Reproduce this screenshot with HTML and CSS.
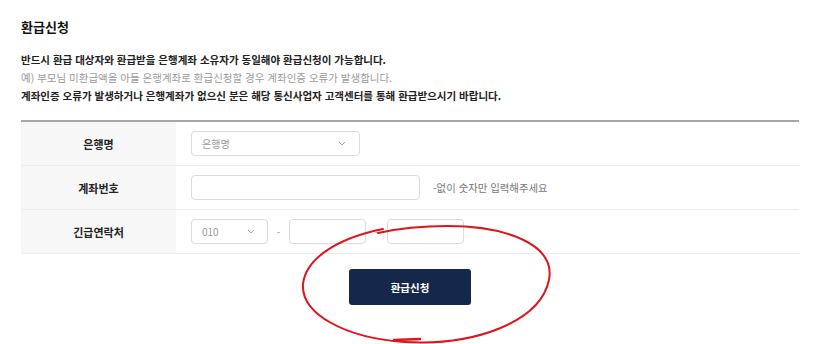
FILE: index.html
```html
<!DOCTYPE html>
<html lang="ko">
<head>
    <meta charset="UTF-8">
    <meta name="viewport" content="width=device-width, initial-scale=1.0">
    <title>환급신청</title>
    <link rel="stylesheet" href="styles.css">
</head>
<body>
    <div class="page">
        <h2 class="title">환급신청</h2>
        <div class="notice">
            <p class="strong">반드시 환급 대상자와 환급받을 은행계좌 소유자가 동일해야 환급신청이 가능합니다.</p>
            <p class="muted">예) 부모님 미환급액을 아들 은행계좌로 환급신청할 경우 계좌인증 오류가 발생합니다.</p>
            <p class="strong">계좌인증 오류가 발생하거나 은행계좌가 없으신 분은 해당 통신사업자 고객센터를 통해 환급받으시기 바랍니다.</p>
        </div>

        <div class="form-table">
            <div class="row">
                <div class="label">은행명</div>
                <div class="field">
                    <div class="select bank">
                        <span>은행명</span>
                        <svg width="8" height="5" viewBox="0 0 8 5"><path d="M1 1l3 3 3-3" fill="none" stroke="#aaa" stroke-width="1"/></svg>
                    </div>
                </div>
            </div>
            <div class="row">
                <div class="label">계좌번호</div>
                <div class="field">
                    <div class="input account"></div>
                    <span class="help">-없이 숫자만 입력해주세요</span>
                </div>
            </div>
            <div class="row">
                <div class="label">긴급연락처</div>
                <div class="field">
                    <div class="select phone">
                        <span>010</span>
                        <svg width="8" height="5" viewBox="0 0 8 5"><path d="M1 1l3 3 3-3" fill="none" stroke="#aaa" stroke-width="1"/></svg>
                    </div>
                    <span class="dash">-</span>
                    <div class="input short"></div>
                    <span class="dash">-</span>
                    <div class="input short"></div>
                </div>
            </div>
        </div>

        <div class="actions">
            <button type="button" class="btn">환급신청</button>
        </div>
    </div>

    <!-- red pen mark drawn over the screenshot -->
    <svg class="mark" width="818" height="344" viewBox="0 0 818 344">
        <path d="M383 229 C338 238 306 258 303 284 C301 314 345 338 405 342 C475 346 540 322 549 280 C556 244 505 226 448 226 C420 226 400 228 378 233"
              fill="none" stroke="#e0141a" stroke-width="2" stroke-linecap="round"/>
        <path d="M394 340 L420 339" fill="none" stroke="#e0141a" stroke-width="2.5" stroke-linecap="round"/>
    </svg>
</body>
</html>
```

FILE: styles.css
```css
body {
    margin: 0;
    background: #fff;
    font-family: "Noto Sans CJK KR", "Noto Sans", sans-serif;
    color: #222;
}
.page {
    width: 778px;
    padding: 19px 0 0 21px;
}
.title {
    margin: 0;
    font-size: 13px;
    line-height: 15px;
    font-weight: 700;
    color: #111;
}
.notice {
    margin-top: 17px;
}
.notice p {
    margin: 0;
    font-size: 10.5px;
    line-height: 18px;
}
.notice .strong {
    font-weight: 700;
    color: #222;
}
.notice .muted {
    color: #9a9a9a;
}
.form-table {
    margin-top: 15px;
    border-top: 2px solid #a6a6a6;
}
.row {
    display: flex;
    height: 44px;
    box-sizing: border-box;
    border-bottom: 1px solid #ececec;
}
.label {
    width: 155px;
    background: #f7f7f7;
    display: flex;
    align-items: center;
    justify-content: center;
    font-size: 11px;
    font-weight: 700;
    color: #222;
}
.field {
    flex: 1;
    display: flex;
    align-items: center;
    padding-left: 15px;
}
.select,
.input {
    height: 25px;
    box-sizing: border-box;
    border: 1px solid #dcdcdc;
    border-radius: 4px;
    background: #fff;
}
.select {
    display: flex;
    align-items: center;
    justify-content: space-between;
    padding: 0 10px 0 10px;
    font-size: 10px;
    color: #999;
}
.select.bank {
    width: 169px;
}
.select.bank svg {
    margin-right: 3px;
}
.select.phone {
    width: 77px;
    padding-right: 12px;
}
.input.account {
    width: 229px;
}
.input.short {
    width: 77px;
}
.help {
    margin-left: 13px;
    font-size: 10.4px;
    color: #777;
}
.dash {
    width: 21px;
    text-align: center;
    font-size: 10px;
    color: #999;
}
.actions {
    display: flex;
    justify-content: center;
    margin-top: 15px;
}
.btn {
    width: 122px;
    height: 36px;
    border: none;
    border-radius: 3px;
    background: #15284b;
    color: #fff;
    font-family: inherit;
    font-size: 10.5px;
    font-weight: 700;
    cursor: pointer;
}
.mark {
    position: absolute;
    left: 0;
    top: 0;
    pointer-events: none;
}
```
